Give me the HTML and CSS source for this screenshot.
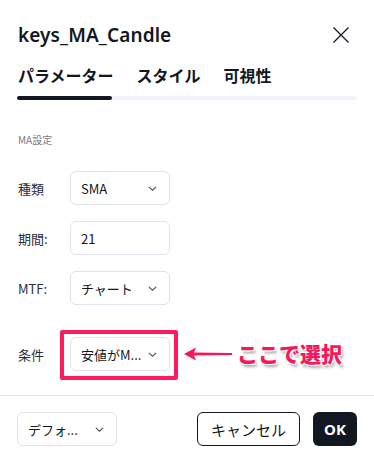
FILE: index.html
```html
<!DOCTYPE html>
<html lang="ja">
<head>
<meta charset="utf-8">
<link rel="stylesheet" href="styles.css">
</head>
<body>
<div class="dialog">
  <div class="header">
    <div class="title">keys_MA_Candle</div>
    <svg class="close" width="18" height="18" viewBox="0 0 18 18"><path d="M1.5 1.5L16.5 16.5M16.5 1.5L1.5 16.5" stroke="#131722" stroke-width="1.3" fill="none"/></svg>
  </div>
  <div class="tabs">
    <div class="tab active">パラメーター</div>
    <div class="tab">スタイル</div>
    <div class="tab">可視性</div>
  </div>
  <div class="tabbar"><div class="tabbar-fill"></div></div>
  <div class="section">MA設定</div>
  <div class="row">
    <div class="label">種類</div>
    <div class="select"><span>SMA</span><svg class="chev" width="9" height="5" viewBox="0 0 9 5"><path d="M0.8 0.8L4.5 4.2L8.2 0.8" stroke="#50535e" stroke-width="1.1" fill="none"/></svg></div>
  </div>
  <div class="row">
    <div class="label">期間:</div>
    <div class="select"><span>21</span></div>
  </div>
  <div class="row">
    <div class="label">MTF:</div>
    <div class="select"><span>チャート</span><svg class="chev" width="9" height="5" viewBox="0 0 9 5"><path d="M0.8 0.8L4.5 4.2L8.2 0.8" stroke="#50535e" stroke-width="1.1" fill="none"/></svg></div>
  </div>
  <div class="row cond">
    <div class="label">条件</div>
    <div class="wrap">
      <div class="select"><span>安値がM...</span><svg class="chev" width="9" height="5" viewBox="0 0 9 5"><path d="M0.8 0.8L4.5 4.2L8.2 0.8" stroke="#50535e" stroke-width="1.1" fill="none"/></svg></div>
      <div class="frame"></div>
      <svg class="arrow" width="52" height="16" viewBox="0 0 52 16"><path d="M2 8L14 1.5L12 6.5L50 7L50 9L12 9.5L14 14.5Z" fill="#f5195c"/></svg>
      <div class="note">ここで選択</div>
    </div>
  </div>
  <div class="divider"></div>
  <div class="footer">
    <div class="select small"><span>デフォ...</span><svg class="chev" width="9" height="5" viewBox="0 0 9 5"><path d="M0.8 0.8L4.5 4.2L8.2 0.8" stroke="#50535e" stroke-width="1.1" fill="none"/></svg></div>
    <div class="spacer"></div>
    <div class="btn cancel">キャンセル</div>
    <div class="btn ok">OK</div>
  </div>
</div>
</body>
</html>
```
FILE: styles.css
```css
* { box-sizing: border-box; }
body {
  margin: 0;
  background: #fff;
  font-family: "Noto Sans", "Noto Sans CJK JP", sans-serif;
  color: #131722;
}
.dialog {
  width: 374px;
  height: 462px;
  display: flex;
  flex-direction: column;
}
.header {
  display: flex;
  align-items: center;
  justify-content: space-between;
  padding: 20px 24px 0 18px;
  height: 50px;
}
.title {
  font-size: 19px;
  font-weight: 600;
  letter-spacing: 0.1px;
}
.close { display: block; }
.tabs {
  display: flex;
  gap: 23px;
  padding: 13px 18px 0 18px;
  height: 42px;
}
.tab {
  font-size: 16px;
  font-weight: 700;
  font-family: "Noto Sans CJK JP", sans-serif;
  line-height: 24px;
}
.tabbar {
  margin: 4px 17px 0 17px;
  height: 4px;
  border-radius: 2px;
  background: #f0f3fa;
}
.tabbar-fill {
  width: 95px;
  height: 4px;
  border-radius: 2px;
  background: #131722;
}
.section {
  margin: 33px 0 0 18px;
  font-size: 10px;
  color: #787b86;
  font-family: "Noto Sans CJK JP", sans-serif;
  line-height: 14px;
}
.row {
  display: flex;
  align-items: center;
  padding-left: 18px;
  margin-top: 16px;
}
.section + .row { margin-top: 24px; }
.row.cond { margin-top: 32px; }
.label {
  width: 52px;
  font-size: 13px;
  color: #2a2e39;
  font-family: "Noto Sans CJK JP", sans-serif;
}
.select {
  width: 100px;
  height: 34px;
  border: 1px solid #e0e3eb;
  border-radius: 6px;
  display: flex;
  align-items: center;
  justify-content: space-between;
  padding: 0 12px 0 10px;
  font-size: 13px;
  color: #131722;
  font-family: "Noto Sans CJK JP", sans-serif;
}
.chev { display: block; }
.wrap { position: relative; }
.frame {
  position: absolute;
  left: -10px;
  top: -7px;
  width: 118px;
  height: 50px;
  border: 4px solid #ff1a5e;
  border-radius: 2px;
}
.arrow {
  position: absolute;
  left: 112px;
  top: 9px;
}
.note {
  position: absolute;
  left: 167px;
  top: 1px;
  white-space: nowrap;
  font-size: 21px;
  font-weight: 900;
  color: #f5195c;
  font-family: "Noto Sans CJK JP", sans-serif;
  text-shadow: -1px -1px 0 #fff, 1px -1px 0 #fff, -1px 1px 0 #fff, 1px 1px 0 #fff, 2px 3px 3px rgba(0,0,0,0.35);
}
.divider {
  margin-top: 24px;
  height: 1px;
  background: #e0e3eb;
}
.footer {
  display: flex;
  align-items: center;
  padding: 16px 17px 0 17px;
}
.spacer { flex: 1; }
.btn {
  height: 34px;
  border-radius: 6px;
  display: flex;
  align-items: center;
  justify-content: center;
  font-size: 15px;
  font-family: "Noto Sans CJK JP", sans-serif;
}
.cancel {
  width: 103px;
  border: 1px solid #131722;
  margin-right: 13px;
}
.ok {
  width: 44px;
  background: #131722;
  color: #fff;
  font-weight: 700;
  font-family: "Noto Sans", sans-serif;
}
```
